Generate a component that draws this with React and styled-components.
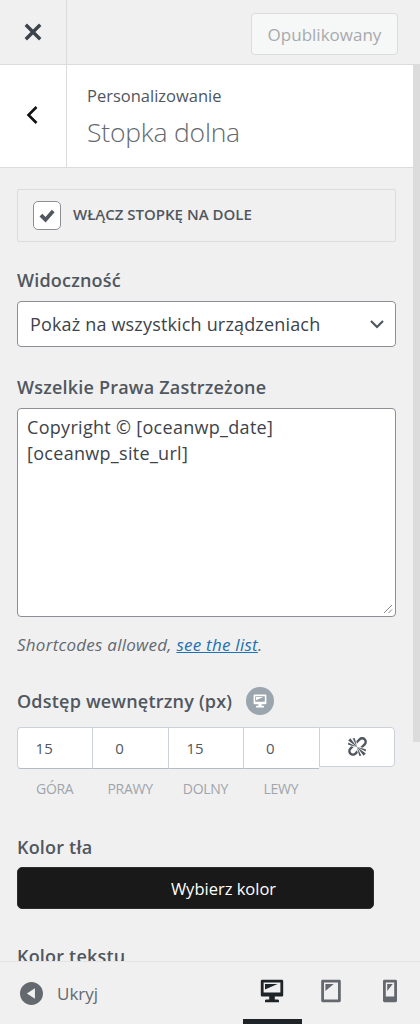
import styled, { createGlobalStyle } from "styled-components";

const icons = {
  close: "M14.95 6.46L11.41 10l3.54 3.54-1.41 1.41L10 11.42l-3.53 3.53-1.42-1.42L8.58 10 5.05 6.47l1.42-1.42L10 8.58l3.54-3.53z",
  desktop: "M3 2h14c.55 0 1 .45 1 1v10c0 .55-.45 1-1 1h-5v2h2c.55 0 1 .45 1 1v1H5v-1c0-.55.45-1 1-1h2v-2H3c-.55 0-1-.45-1-1V3c0-.55.45-1 1-1zm13 9V4H4v7h12zM5 5h9L5 9V5z",
  tablet: "M4 2h12c.55 0 1 .45 1 1v14c0 .55-.45 1-1 1H4c-.55 0-1-.45-1-1V3c0-.55.45-1 1-1zm11 14V4H5v12h10zM6 5h6l-6 5V5z",
  mobile: "M6 2h8c.55 0 1 .45 1 1v14c0 .55-.45 1-1 1H6c-.55 0-1-.45-1-1V3c0-.55.45-1 1-1zm7 12V4H7v10h6zM8 5h4l-4 5V5z",
  unlink: "M17.74 2.26c1.68 1.69 1.68 4.41 0 6.1l-1.53 1.52c-.32.33-.69.58-1.08.77L13 10l1.69-1.64.76-.77.76-.76c.84-.84.84-2.2 0-3.04-.84-.85-2.2-.85-3.04 0l-.77.76-.76.76L10 7l-.65-2.14c.19-.38.44-.75.77-1.07l1.52-1.53c1.69-1.68 4.42-1.68 6.1 0zM2 4l8 6-6-8zm4-2l4 8-2-8H6zM2 6l8 4-8-2V6zm7.36 7.69L10 13l.74 2.35-1.38 1.39c-1.69 1.68-4.41 1.68-6.1 0-1.68-1.68-1.68-4.42 0-6.1l1.39-1.38L7 10l-.69.64-1.52 1.53c-.85.84-.85 2.2 0 3.04.84.85 2.2.85 3.04 0zM18 16l-8-6 6 8zm-4 2l-4-8 2 8h2zm4-4l-8-4 8 2v2z",
  collapse: "M10 20c5.5 0 10-4.5 10-10S15.5 0 10 0 0 4.5 0 10s4.5 10 10 10zM13 5.5v9L6 10z",
};

const Icon = ({ name, size, color }) => (
  <svg width={size} height={size} viewBox="0 0 20 20" fill={color} fillRule="evenodd">
    <path d={icons[name]} />
  </svg>
);

const App = () => {
  return (
    <>
      <Global />
      <Page>
        <Header>
          <CloseButton>
            <Icon name="close" size={34} color="#3c434a" />
          </CloseButton>
          <PublishButton>Opublikowany</PublishButton>
        </Header>
        <Main>
          <Panel>
            <TitleBar>
              <BackButton>
                <svg width="14" height="22" viewBox="0 0 14 22" fill="none">
                  <path d="M11.5 3L3.5 11l8 8" stroke="#111" strokeWidth="2.6" />
                </svg>
              </BackButton>
              <Titles>
                <Crumb>Personalizowanie</Crumb>
                <Title>Stopka dolna</Title>
              </Titles>
            </TitleBar>
            <Content>
              <CheckRow>
                <CheckBox>
                  <svg width="22" height="22" viewBox="0 0 22 22">
                    <path d="M3.5 11.5l2.8-2.8 3.2 3.2 6.3-7.2 2.8 2.6-9 10.2z" fill="#50575e" />
                  </svg>
                </CheckBox>
                <CheckLabel>WŁĄCZ STOPKĘ NA DOLE</CheckLabel>
              </CheckRow>

              <Label $top={26}>Widoczność</Label>
              <Select>
                <span>Pokaż na wszystkich urządzeniach</span>
                <svg width="16" height="10" viewBox="0 0 16 10" fill="none">
                  <path d="M2 2l6 6 6-6" stroke="#50575e" strokeWidth="2.2" />
                </svg>
              </Select>

              <Label $top={28}>Wszelkie Prawa Zastrzeżone</Label>
              <TextArea>
                Copyright © [oceanwp_date]
                <br />
                [oceanwp_site_url]
                <Grip viewBox="0 0 10 10">
                  <path d="M1 9l8-8M5.5 9L9 5.5" stroke="#8a8a8a" strokeWidth="1" />
                </Grip>
              </TextArea>
              <Note>
                Shortcodes allowed, <NoteLink>see the list</NoteLink>.
              </Note>

              <PaddingHead>
                <Label>Odstęp wewnętrzny (px)</Label>
                <DeviceBadge>
                  <Icon name="desktop" size={16} color="#fff" />
                </DeviceBadge>
              </PaddingHead>
              <Spacing>
                {[
                  ["15", "GÓRA"],
                  ["0", "PRAWY"],
                  ["15", "DOLNY"],
                  ["0", "LEWY"],
                ].map(([value, name]) => (
                  <SpacingCol key={name}>
                    <SpacingInput>{value}</SpacingInput>
                    <SpacingName>{name}</SpacingName>
                  </SpacingCol>
                ))}
                <LinkButton>
                  <Icon name="unlink" size={22} color="#50575e" />
                </LinkButton>
              </Spacing>

              <Label $top={37}>Kolor tła</Label>
              <ColorButton>Wybierz kolor</ColorButton>
              <Label $top={35}>Kolor tekstu</Label>
            </Content>
          </Panel>
          <ScrollTrack>
            <ScrollThumb />
          </ScrollTrack>
        </Main>
        <Footer>
          <HideButton>
            <Icon name="collapse" size={23} color="#646970" />
            <span>Ukryj</span>
          </HideButton>
          <Devices>
            <DeviceButton $active>
              <Icon name="desktop" size={28} color="#1d2327" />
            </DeviceButton>
            <DeviceButton>
              <Icon name="tablet" size={28} color="#646970" />
            </DeviceButton>
            <DeviceButton>
              <Icon name="mobile" size={28} color="#646970" />
            </DeviceButton>
          </Devices>
        </Footer>
      </Page>
    </>
  );
};

const Global = createGlobalStyle`
  html, body {
    margin: 0;
    padding: 0;
    background: #f0f0f1;
  }
  * {
    box-sizing: border-box;
  }
`;

const Page = styled.div`
  width: 420px;
  height: 1024px;
  overflow: hidden;
  display: flex;
  flex-direction: column;
  background: #f0f0f1;
  font-family: "Open Sans", "Noto Sans", sans-serif;
  color: #50575e;
`;

const Header = styled.header`
  height: 65px;
  flex: none;
  display: flex;
  align-items: stretch;
  justify-content: space-between;
  padding-right: 22px;
  border-bottom: 1px solid #dcdcde;
`;

const CloseButton = styled.div`
  width: 67px;
  display: flex;
  align-items: center;
  justify-content: center;
  border-right: 1px solid #dcdcde;
`;

const PublishButton = styled.div`
  align-self: flex-start;
  margin-top: 13px;
  width: 147px;
  height: 42px;
  display: flex;
  align-items: center;
  justify-content: center;
  background: #f6f7f7;
  border: 1px solid #dcdcde;
  border-radius: 4px;
  color: #a7aaad;
  font-size: 17px;
`;

const Main = styled.main`
  flex: 1;
  min-height: 0;
  display: flex;
`;

const Panel = styled.div`
  flex: 1;
  min-width: 0;
  overflow: hidden;
`;

const TitleBar = styled.div`
  height: 103px;
  display: flex;
  background: #fff;
  border-bottom: 1px solid #dcdcde;
`;

const BackButton = styled.div`
  width: 67px;
  display: flex;
  align-items: center;
  justify-content: center;
  padding: 0 2px 2px 0;
  border-right: 1px solid #dcdcde;
`;

const Titles = styled.div`
  padding: 20px 0 0 20px;
`;

const Crumb = styled.div`
  font-size: 16.5px;
  line-height: 22px;
  color: #50575e;
`;

const Title = styled.div`
  margin-top: 8px;
  font-size: 26.5px;
  line-height: 34px;
  font-weight: 300;
  color: #646970;
  letter-spacing: -0.2px;
`;

const Content = styled.div`
  padding: 21px 17px 0;
  width: 396px;
  margin-right: -17px;
`;

const CheckRow = styled.div`
  height: 53px;
  width: 379px;
  display: flex;
  align-items: center;
  gap: 12px;
  padding-left: 15px;
  border: 1px solid #dcdcde;
  border-radius: 2px;
`;

const CheckBox = styled.div`
  width: 28px;
  height: 29px;
  display: flex;
  align-items: center;
  justify-content: center;
  background: #fff;
  border: 1px solid #8c8f94;
  border-radius: 5px;
`;

const CheckLabel = styled.span`
  padding-bottom: 3px;
  font-size: 15px;
  font-weight: 600;
  color: #50575e;
`;

const Label = styled.div`
  margin-top: ${(p) => p.$top || 0}px;
  font-size: 18px;
  line-height: 24px;
  font-weight: 600;
  color: #50575e;
  letter-spacing: 0.2px;
`;

const Select = styled.div`
  margin-top: 9px;
  width: 379px;
  height: 46px;
  display: flex;
  align-items: center;
  justify-content: space-between;
  padding: 0 10px 0 12px;
  background: #fff;
  border: 1px solid #8c8f94;
  border-radius: 4px;
  font-size: 18px;
  color: #3c434a;
  letter-spacing: 0.17px;
`;

const TextArea = styled.div`
  position: relative;
  margin-top: 9px;
  width: 379px;
  height: 209px;
  padding: 5px 9px;
  background: #fff;
  border: 1px solid #8c8f94;
  border-radius: 4px;
  font-size: 18px;
  line-height: 26px;
  color: #3c434a;
  letter-spacing: 0.3px;
`;

const Grip = styled.svg`
  position: absolute;
  right: 2px;
  bottom: 2px;
  width: 10px;
  height: 10px;
`;

const Note = styled.div`
  margin-top: 17px;
  font-size: 17px;
  line-height: 22px;
  font-style: italic;
  color: #646970;
  letter-spacing: 0.25px;
`;

const NoteLink = styled.span`
  color: #2271b1;
  text-decoration: underline;
`;

const PaddingHead = styled.div`
  margin-top: 31px;
  display: flex;
  align-items: center;
  gap: 14px;
`;

const DeviceBadge = styled.div`
  width: 28px;
  height: 28px;
  display: flex;
  align-items: center;
  justify-content: center;
  background: #9aa5ae;
  border-radius: 50%;
`;

const Spacing = styled.div`
  margin-top: 12px;
  display: flex;
  align-items: flex-start;
  width: 378px;
`;

const SpacingCol = styled.div`
  width: 75.4px;
`;

const SpacingInput = styled.div`
  height: 42px;
  display: flex;
  align-items: center;
  justify-content: center;
  padding-right: 22px;
  background: #fff;
  border: 1px solid #ccd1d9;
  border-right: none;
  border-bottom-color: #b4bbc4;
  font-size: 15px;
  color: #50575e;
  ${SpacingCol}:first-child & {
    border-radius: 4px 0 0 4px;
  }
`;

const SpacingName = styled.div`
  margin-top: 11px;
  font-size: 14px;
  line-height: 18px;
  text-align: center;
  color: #a0a5aa;
  letter-spacing: -0.3px;
`;

const LinkButton = styled.div`
  flex: 1;
  height: 40px;
  display: flex;
  align-items: center;
  justify-content: center;
  background: #fff;
  border: 1px solid #ccd1d9;
  border-radius: 0 4px 4px 0;
`;

const ColorButton = styled.div`
  margin-top: 8px;
  width: 357px;
  height: 42px;
  display: flex;
  align-items: center;
  justify-content: center;
  padding-left: 56px;
  background: #191919;
  border: 1px solid #2c2c2c;
  border-radius: 5px;
  color: #fff;
  font-size: 16.5px;
`;

const ScrollTrack = styled.div`
  width: 7px;
  flex: none;
  background: #f0f0f1;
`;

const ScrollThumb = styled.div`
  height: 677px;
  background: #dcdcdc;
`;

const Footer = styled.footer`
  height: 63px;
  flex: none;
  display: flex;
  align-items: center;
  justify-content: space-between;
  padding: 0 1px 0 20px;
  background: #f0f0f1;
  border-top: 1px solid #e4e4e5;
`;

const HideButton = styled.div`
  display: flex;
  align-items: center;
  gap: 14px;
  font-size: 17px;
  color: #646970;
`;

const Devices = styled.div`
  display: flex;
  align-self: stretch;
`;

const DeviceButton = styled.div`
  width: 58.7px;
  display: flex;
  align-items: center;
  justify-content: center;
  border-bottom: 5px solid ${(p) => (p.$active ? "#1d2327" : "transparent")};
`;

export default App;
